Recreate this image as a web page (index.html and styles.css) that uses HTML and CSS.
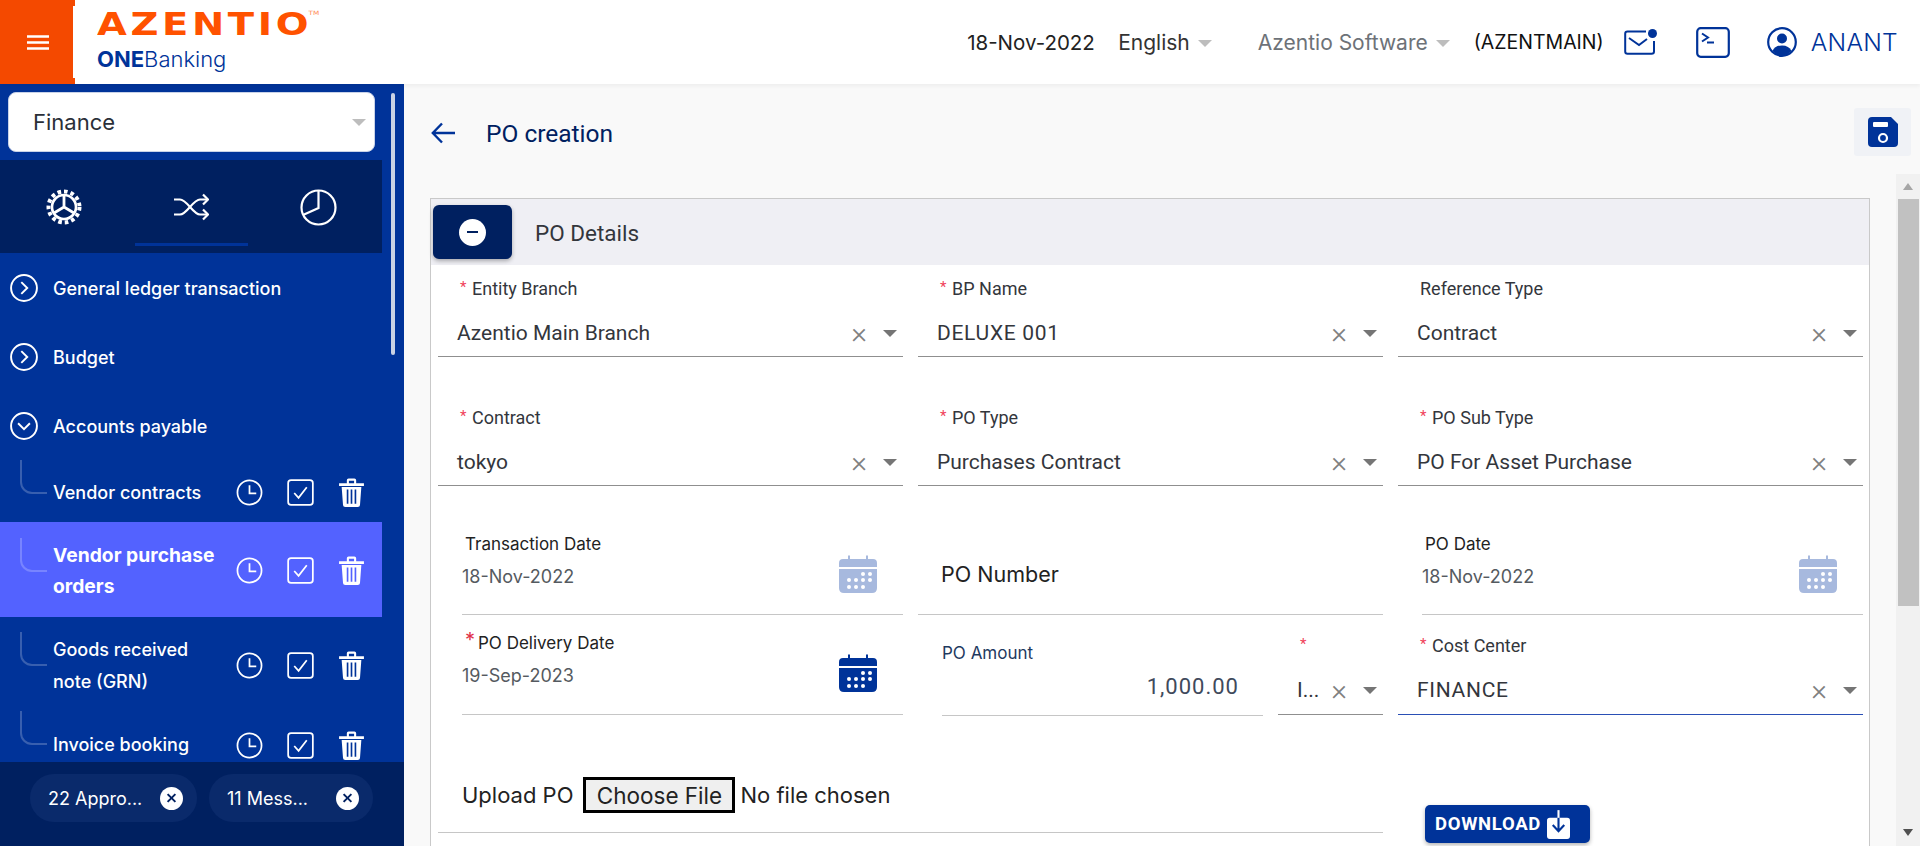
FILE: index.html
```html
<!DOCTYPE html>
<html lang="en">
<head>
    <meta charset="UTF-8">
    <title>PO creation</title>
    <link rel="stylesheet" href="styles.css">
</head>
<body>

    <svg class="sprite" xmlns="http://www.w3.org/2000/svg">
        <symbol id="i-clock" viewBox="0 0 28 28">
            <circle cx="14" cy="14" r="12.5" fill="none" stroke="currentColor" stroke-width="1.8"/>
            <path d="M14 6.5V15H21" fill="none" stroke="currentColor" stroke-width="1.8"/>
        </symbol>
        <symbol id="i-check" viewBox="0 0 28 28">
            <rect x="1.2" y="1.2" width="25.6" height="25.6" rx="3" fill="none" stroke="currentColor" stroke-width="1.8"/>
            <path d="M7.5 14.5L12 19.5L20.5 8.5" fill="none" stroke="currentColor" stroke-width="1.8"/>
        </symbol>
        <symbol id="i-trash" viewBox="0 0 24 28">
            <path d="M0 5H24V7.8H0ZM7.5 5V2.2Q7.5 0.5 9.2 0.5H14.8Q16.5 0.5 16.5 2.2V5H14.5V2.6H9.5V5Z" fill="currentColor"/>
            <path d="M2.5 8.8H21.5L20.2 26Q20.1 28 18 28H6Q3.9 28 3.8 26ZM7.4 11V24.8H9V11ZM11.2 11V24.8H12.8V11ZM15 11V24.8H16.6V11Z" fill="currentColor" fill-rule="evenodd"/>
        </symbol>
        <symbol id="i-calendar" viewBox="0 0 38 38">
            <path d="M9 0.5H11V4H27V0.5H29V4H34Q38 4 38 8V12H0V8Q0 4 4 4H9Z" fill="currentColor"/>
            <path d="M0 14H38V33Q38 38 33 38H5Q0 38 0 33Z" fill="currentColor"/>
            <g fill="#fff">
                <circle cx="24" cy="19" r="2"/><circle cx="31" cy="19" r="2"/>
                <circle cx="10" cy="25" r="2"/><circle cx="17" cy="25" r="2"/><circle cx="24" cy="25" r="2"/><circle cx="31" cy="25" r="2"/>
                <circle cx="10" cy="32" r="2"/><circle cx="17" cy="32" r="2"/><circle cx="24" cy="32" r="2"/>
            </g>
        </symbol>
    </svg>

    <header class="topbar">
        <div class="brand-menu">
            <svg class="burger" width="22" height="15" viewBox="0 0 22 15"><path d="M0 1.5H22M0 7.5H22M0 13.5H22" stroke="#fff" stroke-width="2.4"/></svg>
        </div>
        <div class="logo">
            <div class="logo-main">AZENTIO<sup>TM</sup></div>
            <div class="logo-sub"><b>ONE</b>Banking</div>
        </div>
        <div class="top-right">
            <span class="top-date">18-Nov-2022</span>
            <span class="top-lang">English<i class="caret caret-light"></i></span>
            <span class="top-company">Azentio Software<i class="caret caret-light"></i></span>
            <span class="top-branch">(AZENTMAIN)</span>
            <svg class="top-mail" width="33" height="26" viewBox="0 0 33 26">
                <path d="M22 2.5H3.5Q1.2 2.5 1.2 4.8V22.5Q1.2 24.8 3.5 24.8H27.5Q30 24.8 30 22.5V12" fill="none" stroke="#003399" stroke-width="2"/>
                <path d="M5 9L15 16L23 10" fill="none" stroke="#003399" stroke-width="2"/>
                <circle cx="28.5" cy="4.5" r="4.5" fill="#003399"/>
            </svg>
            <svg class="top-console" width="34" height="31" viewBox="0 0 34 31">
                <rect x="1.2" y="1.2" width="31.6" height="28.6" rx="3.5" fill="none" stroke="#003399" stroke-width="2.2"/>
                <path d="M6 6.5L12 10.5L6 14.5M11 15.5H18" fill="none" stroke="#003399" stroke-width="2"/>
            </svg>
            <svg class="top-user" width="30" height="30" viewBox="0 0 30 30">
                <circle cx="15" cy="15" r="13.8" fill="none" stroke="#003399" stroke-width="2.2"/>
                <circle cx="15" cy="11.5" r="5" fill="#003399"/>
                <path d="M5.5 24Q8 18.5 15 18.5Q22 18.5 24.5 24Q20 28.5 15 28.5Q10 28.5 5.5 24Z" fill="#003399"/>
            </svg>
            <span class="top-user-name">ANANT</span>
        </div>
    </header>

    <div class="layout">
        <!-- Sidebar -->
        <aside class="sidebar">
            <div class="side-scroll"></div>
            <div class="module-select">
                <span>Finance</span>
                <i class="caret caret-light"></i>
            </div>
            <div class="side-tabs">
                <div class="side-tab">
                    <svg width="36" height="36" viewBox="0 0 36 36">
                        <circle cx="18" cy="18" r="15.5" fill="none" stroke="#fff" stroke-width="4" stroke-dasharray="3.6 3"/>
                        <circle cx="18" cy="18" r="12" fill="none" stroke="#fff" stroke-width="2.6"/>
                        <path d="M18 18V6.5M18 18L8 24M18 18L28 24" stroke="#fff" stroke-width="2.8"/>
                    </svg>
                </div>
                <div class="side-tab active">
                    <svg width="36" height="32" viewBox="0 0 36 32">
                        <path d="M1 8.5H7C14 8.5 20 23.5 27 23.5H34M1 23.5H7C14 23.5 20 8.5 27 8.5H34" fill="none" stroke="#fff" stroke-width="2.2"/>
                        <path d="M30 3.5L35 8.5L30 13.5M30 18.5L35 23.5L30 28.5" fill="none" stroke="#fff" stroke-width="2.2"/>
                    </svg>
                </div>
                <div class="side-tab">
                    <svg width="38" height="38" viewBox="0 0 38 38">
                        <circle cx="19.5" cy="19.5" r="17" fill="none" stroke="#fff" stroke-width="2.2"/>
                        <path d="M19.5 2V20L4 27" fill="none" stroke="#fff" stroke-width="2.2"/>
                    </svg>
                </div>
            </div>

            <nav class="side-menu">
                <div class="menu-group">
                    <svg class="menu-toggle" width="28" height="28" viewBox="0 0 26 26"><circle cx="13" cy="13" r="12" fill="none" stroke="#fff" stroke-width="1.8"/><path d="M10.5 7.5L16 13L10.5 18.5" fill="none" stroke="#fff" stroke-width="1.8"/></svg>
                    General ledger transaction
                </div>
                <div class="menu-group">
                    <svg class="menu-toggle" width="28" height="28" viewBox="0 0 26 26"><circle cx="13" cy="13" r="12" fill="none" stroke="#fff" stroke-width="1.8"/><path d="M10.5 7.5L16 13L10.5 18.5" fill="none" stroke="#fff" stroke-width="1.8"/></svg>
                    Budget
                </div>
                <div class="menu-group">
                    <svg class="menu-toggle" width="28" height="28" viewBox="0 0 26 26"><circle cx="13" cy="13" r="12" fill="none" stroke="#fff" stroke-width="1.8"/><path d="M7.5 10.5L13 16L18.5 10.5" fill="none" stroke="#fff" stroke-width="1.8"/></svg>
                    Accounts payable
                </div>

                <div class="menu-item item-vendor">
                    <span class="item-name">Vendor contracts</span>
                    <span class="item-icons">
                        <svg class="ic-clock"><use href="#i-clock"/></svg>
                        <svg class="ic-check"><use href="#i-check"/></svg>
                        <svg class="ic-trash"><use href="#i-trash"/></svg>
                    </span>
                </div>
                <div class="menu-item item-active">
                    <span class="item-name">Vendor purchase orders</span>
                    <span class="item-icons">
                        <svg class="ic-clock"><use href="#i-clock"/></svg>
                        <svg class="ic-check"><use href="#i-check"/></svg>
                        <svg class="ic-trash"><use href="#i-trash"/></svg>
                    </span>
                </div>
                <div class="menu-item item-goods">
                    <span class="item-name">Goods received note (GRN)</span>
                    <span class="item-icons">
                        <svg class="ic-clock"><use href="#i-clock"/></svg>
                        <svg class="ic-check"><use href="#i-check"/></svg>
                        <svg class="ic-trash"><use href="#i-trash"/></svg>
                    </span>
                </div>
                <div class="menu-item item-invoice">
                    <span class="item-name">Invoice booking</span>
                    <span class="item-icons">
                        <svg class="ic-clock"><use href="#i-clock"/></svg>
                        <svg class="ic-check"><use href="#i-check"/></svg>
                        <svg class="ic-trash"><use href="#i-trash"/></svg>
                    </span>
                </div>
            </nav>

            <div class="side-footer">
                <div class="chip chip-first">
                    <span>22 Appro...</span>
                    <i class="chip-close"></i>
                </div>
                <div class="chip chip-second">
                    <span>11 Mess...</span>
                    <i class="chip-close"></i>
                </div>
            </div>
        </aside>

        <!-- Main content -->
        <main class="content">
            <div class="page-head">
                <div class="page-title">
                    <svg width="25" height="22" viewBox="0 0 25 22"><path d="M24 11H2M11 1.5L1.8 11L11 20.5" fill="none" stroke="#003399" stroke-width="2.4"/></svg>
                    <span>PO creation</span>
                </div>
                <div class="save-btn">
                    <svg width="30" height="30" viewBox="0 0 30 30">
                        <path d="M4 0H23L30 7V26Q30 30 26 30H4Q0 30 0 26V4Q0 0 4 0Z" fill="#003399"/>
                        <rect x="5" y="5" width="15" height="5" rx="1" fill="#fff"/>
                        <circle cx="15" cy="21" r="4" fill="none" stroke="#fff" stroke-width="2.2"/>
                    </svg>
                </div>
            </div>

            <div class="scroll-area">
                <div class="scroll-inner">
                    <section class="card">
                        <div class="card-head">
                            <div class="collapse-btn"><i class="minus-icon"></i></div>
                            <h3>PO Details</h3>
                        </div>

                        <div class="form-grid">
                            <div class="field">
                                <label class="req">Entity Branch</label>
                                <div class="select-row">
                                    <span class="select-value">Azentio Main Branch</span>
                                    <span class="clear">&times;</span><i class="caret"></i>
                                </div>
                            </div>
                            <div class="field">
                                <label class="req">BP Name</label>
                                <div class="select-row">
                                    <span class="select-value caps">DELUXE 001</span>
                                    <span class="clear">&times;</span><i class="caret"></i>
                                </div>
                            </div>
                            <div class="field">
                                <label>Reference Type</label>
                                <div class="select-row">
                                    <span class="select-value">Contract</span>
                                    <span class="clear">&times;</span><i class="caret"></i>
                                </div>
                            </div>

                            <div class="field">
                                <label class="req">Contract</label>
                                <div class="select-row">
                                    <span class="select-value">tokyo</span>
                                    <span class="clear">&times;</span><i class="caret"></i>
                                </div>
                            </div>
                            <div class="field">
                                <label class="req">PO Type</label>
                                <div class="select-row">
                                    <span class="select-value">Purchases Contract</span>
                                    <span class="clear">&times;</span><i class="caret"></i>
                                </div>
                            </div>
                            <div class="field">
                                <label class="req">PO Sub Type</label>
                                <div class="select-row">
                                    <span class="select-value">PO For Asset Purchase</span>
                                    <span class="clear">&times;</span><i class="caret"></i>
                                </div>
                            </div>

                            <div class="date-field">
                                <div>
                                    <label>Transaction Date</label>
                                    <div class="date-value">18-Nov-2022</div>
                                </div>
                                <svg class="cal cal-off"><use href="#i-calendar"/></svg>
                            </div>
                            <div class="number-field">PO Number</div>
                            <div class="date-field date-third">
                                <div>
                                    <label>PO Date</label>
                                    <div class="date-value">18-Nov-2022</div>
                                </div>
                                <svg class="cal cal-off"><use href="#i-calendar"/></svg>
                            </div>

                            <div class="date-field date-tall">
                                <div>
                                    <label class="req">PO Delivery Date</label>
                                    <div class="date-value">19-Sep-2023</div>
                                </div>
                                <svg class="cal"><use href="#i-calendar"/></svg>
                            </div>
                            <div class="amount-group">
                                <div class="amount-field">
                                    <label>PO Amount</label>
                                    <div class="amount-value">1,000.00</div>
                                </div>
                                <div class="field field-tall field-currency">
                                    <label class="req"></label>
                                    <div class="select-row">
                                        <span class="select-value">I...</span>
                                        <span class="clear">&times;</span><i class="caret"></i>
                                    </div>
                                </div>
                            </div>
                            <div class="field field-tall">
                                <label class="req">Cost Center</label>
                                <div class="select-row focused">
                                    <span class="select-value caps">FINANCE</span>
                                    <span class="clear">&times;</span><i class="caret"></i>
                                </div>
                            </div>

                            <div class="upload-field">
                                <span class="upload-label">Upload PO</span>
                                <button type="button" class="file-btn">Choose File</button>
                                <span class="file-name">No file chosen</span>
                            </div>
                            <div class="download-cell">
                                <button type="button" class="download-btn">
                                    DOWNLOAD
                                    <svg width="23" height="29" viewBox="0 0 24 30">
                                        <path d="M3 8H21Q24 8 24 11V27Q24 30 21 30H3Q0 30 0 27V11Q0 8 3 8Z" fill="#fff"/>
                                        <path d="M12 8V21M6 15.5L12 22L18 15.5" fill="none" stroke="#003399" stroke-width="2.2"/>
                                        <path d="M12 0V8" stroke="#fff" stroke-width="2.2"/>
                                    </svg>
                                </button>
                            </div>
                        </div>
                    </section>
                </div>

                <div class="scroll-track">
                    <i class="arrow-up"></i>
                    <div class="scroll-thumb"></div>
                    <i class="arrow-down"></i>
                </div>
            </div>
        </main>
    </div>

</body>
</html>
```

FILE: styles.css
```css
* {
    box-sizing: border-box;
}

html, body {
    height: 100%;
}

body {
    margin: 0;
    height: 846px;
    overflow: hidden;
    background: #f9f9f9;
    font-family: Roboto, Arial, sans-serif;
    color: #222;
    display: flex;
    flex-direction: column;
}

.sprite {
    display: none;
}

.caret {
    display: inline-block;
    width: 0;
    height: 0;
    border-left: 7px solid transparent;
    border-right: 7px solid transparent;
    border-top: 7px solid #757575;
}

.caret-light {
    border-top-color: #bdbdbd;
}

/* Top bar */
.topbar {
    flex: 0 0 84px;
    display: flex;
    align-items: center;
    background: #fff;
    box-shadow: 0 2px 4px rgba(0, 0, 0, 0.05);
    position: relative;
    z-index: 2;
}

.brand-menu {
    width: 75px;
    height: 84px;
    background: #f44900;
    display: flex;
    align-items: center;
    justify-content: center;
    position: relative;
}

/* white notch on the orange block */
.brand-menu::after {
    content: "";
    position: absolute;
    right: 0;
    top: 6px;
    bottom: 6px;
    width: 2px;
    background: #fff;
}

.logo {
    margin-left: 22px;
    height: 84px;
    padding-top: 7px;
}

.logo-main {
    font-family: "DejaVu Sans", sans-serif;
    font-weight: 700;
    font-size: 32px;
    line-height: 34px;
    color: #ff5200;
    letter-spacing: 3px;
    width: 172px;
    white-space: nowrap;
    transform: scaleX(1.205);
    transform-origin: left;
}

.logo-main sup {
    font-size: 6px;
    font-weight: 400;
    color: #ff8c5a;
    letter-spacing: 0;
    vertical-align: 20px;
    line-height: 0;
    margin-left: -3px;
}

.logo-sub {
    font-family: Inter, sans-serif;
    font-size: 22px;
    line-height: 26px;
    margin-top: 5px;
    font-weight: 300;
    color: #003399;
}

.logo-sub b {
    font-weight: 700;
}

.top-right {
    margin-left: auto;
    display: flex;
    align-items: center;
    font-family: Inter, sans-serif;
    height: 84px;
    padding-right: 22px;
}

.top-date {
    width: 127px;
    white-space: nowrap;
    font-size: 20.5px;
    color: #222;
    margin-right: 24px;
}

.top-lang {
    font-size: 21px;
    color: #333;
    margin-right: 46px;
}

.top-company {
    font-size: 21px;
    color: #6d7278;
    margin-right: 24px;
}

.top-lang .caret,
.top-company .caret {
    margin-left: 8px;
    vertical-align: 3px;
}

.top-branch {
    font-size: 19.5px;
    width: 129px;
    white-space: nowrap;
    color: #111;
    margin-right: 21px;
}

.top-console {
    margin-left: 39px;
}

.top-user {
    margin-left: 37px;
}

.top-user-name {
    font-size: 24.5px;
    font-weight: 300;
    letter-spacing: 0.3px;
    color: #003399;
    margin-left: 14px;
}

/* Layout */
.layout {
    flex: 1;
    display: flex;
    min-height: 0;
}

/* Sidebar */
.sidebar {
    width: 404px;
    background: #003399;
    display: flex;
    flex-direction: column;
    position: relative;
    font-family: Inter, sans-serif;
    color: #fff;
}

.side-scroll {
    position: absolute;
    left: 391px;
    top: 9px;
    width: 4px;
    height: 262px;
    background: #c9d2e4;
    border-radius: 2px;
}

.module-select {
    margin: 8px 29px 8px 8px;
    height: 60px;
    background: #fff;
    border-radius: 8px;
    border: 1px solid #c8d2e8;
    display: flex;
    align-items: center;
    justify-content: space-between;
    padding: 0 8px 0 24px;
    font-size: 22px;
    color: #2a2f38;
}

.side-tabs {
    width: 382px;
    height: 93px;
    background: #002060;
    display: flex;
}

.side-tab {
    flex: 1;
    display: flex;
    align-items: center;
    justify-content: center;
    position: relative;
}

.side-tab.active::after {
    content: "";
    position: absolute;
    left: 8px;
    right: 7px;
    bottom: 7px;
    height: 3px;
    background: #003399;
}

.side-menu {
    flex: 1;
    min-height: 0;
    overflow: hidden;
    width: 382px;
}

.menu-group {
    height: 70px;
    display: flex;
    align-items: center;
    gap: 15px;
    padding-left: 10px;
    font-size: 18px;
    font-weight: 500;
}

.menu-group:nth-child(2) {
    height: 68px;
}

.menu-item {
    display: flex;
    align-items: center;
    position: relative;
    padding-left: 53px;
    font-size: 18px;
    font-weight: 500;
    line-height: 32px;
}

/* tree connector */
.menu-item::before {
    content: "";
    position: absolute;
    left: 20px;
    width: 25px;
    height: 32px;
    border-left: 2px solid rgba(255, 255, 255, 0.22);
    border-bottom: 2px solid rgba(255, 255, 255, 0.22);
    border-bottom-left-radius: 12px;
}

.item-vendor {
    height: 61px;
    padding-top: 2px;
}

.item-vendor::before {
    top: -1px;
}

.item-active {
    height: 95px;
    padding-top: 2px;
    background: #5362ff;
    font-size: 19.3px;
    font-weight: 700;
    line-height: 31px;
}

.item-active::before {
    top: 16px;
}

.item-goods {
    height: 94px;
    padding-top: 3px;
}

.item-goods::before {
    top: 15px;
}

.item-invoice {
    height: 68px;
}

.item-invoice::before {
    top: 0;
}

.item-name {
    width: 170px;
}

.item-icons {
    margin-left: auto;
    width: 150px;
    display: flex;
    align-items: center;
    padding-left: 3.5px;
}

.ic-clock {
    width: 27px;
    height: 27px;
}

.ic-check {
    width: 27px;
    height: 27px;
    margin-left: 24px;
}

.ic-trash {
    width: 25px;
    height: 29px;
    margin-left: 25px;
}

.side-footer {
    flex: 0 0 84px;
    background: #002060;
    padding: 12px 31px 0 30px;
    display: flex;
    gap: 12px;
}

.chip {
    height: 48px;
    border-radius: 24px;
    background: #0a2a6b;
    display: flex;
    align-items: center;
    justify-content: space-between;
    font-size: 18px;
    padding: 0 14px 0 18px;
}

.chip-first {
    width: 167px;
}

.chip-second {
    width: 164px;
}

.chip-close {
    width: 23px;
    height: 23px;
    border-radius: 50%;
    background: #fff;
    position: relative;
}

.chip-close::before,
.chip-close::after {
    content: "";
    position: absolute;
    left: 6px;
    top: 10.5px;
    width: 11px;
    height: 2px;
    background: #002060;
    transform: rotate(45deg);
}

.chip-close::after {
    transform: rotate(-45deg);
}

/* Main content */
.content {
    flex: 1;
    min-width: 0;
    display: flex;
    flex-direction: column;
}

.page-head {
    flex: 0 0 90px;
    display: flex;
    align-items: flex-start;
    justify-content: space-between;
    padding: 24px 9px 0 27px;
}

.page-title {
    display: flex;
    align-items: center;
    gap: 30px;
    font-size: 24.5px;
    color: #002060;
    height: 50px;
}

.save-btn {
    width: 57px;
    height: 48px;
    background: #f0f2f6;
    border-radius: 3px;
    display: flex;
    align-items: center;
    justify-content: center;
}

.scroll-area {
    flex: 1;
    min-height: 0;
    display: flex;
}

.scroll-inner {
    flex: 1;
    min-width: 0;
    padding: 24px 26px 0 26px;
    overflow: hidden;
}

.scroll-track {
    width: 24px;
    background: #f1f1f1;
    display: flex;
    flex-direction: column;
    align-items: center;
    padding-top: 9px;
}

.arrow-up,
.arrow-down {
    width: 0;
    height: 0;
    border-left: 5px solid transparent;
    border-right: 5px solid transparent;
}

.arrow-up {
    border-bottom: 7px solid #a6a6a6;
}

.arrow-down {
    border-top: 7px solid #505050;
    margin-top: auto;
    margin-bottom: 10px;
}

.scroll-thumb {
    width: 21px;
    height: 407px;
    margin-top: 9px;
    background: #c1c1c1;
}

.card {
    border: 1px solid #c9c9c9;
    background: #fff;
    height: 800px;
}

.card-head {
    height: 66px;
    background: #efeff4;
    display: flex;
    align-items: center;
    padding: 0 0 0 2px;
}

.card-head h3 {
    margin: 2px 0 0 23px;
    font-weight: 400;
    font-size: 22.5px;
    color: #33363c;
}

.collapse-btn {
    width: 79px;
    height: 54px;
    background: #002060;
    border-radius: 6px;
    box-shadow: 0 2px 4px rgba(0, 0, 0, 0.3);
    display: flex;
    align-items: center;
    justify-content: center;
}

.minus-icon {
    width: 27px;
    height: 27px;
    border-radius: 50%;
    background: #fff;
    position: relative;
}

.minus-icon::after {
    content: "";
    position: absolute;
    left: 8px;
    top: 12.5px;
    width: 11px;
    height: 2px;
    background: #002060;
}

/* Form */
.form-grid {
    display: grid;
    grid-template-columns: 465px 465px 465px;
    grid-template-rows: 129px 129px 92px 100px auto;
    column-gap: 15px;
    padding: 0 6px 0 7px;
}

.field {
    height: 92px;
    display: flex;
    flex-direction: column;
}

.field label {
    font-size: 18px;
    line-height: 24px;
    min-height: 24px;
    margin-top: 12px;
    padding-left: 22px;
    color: #33363c;
    position: relative;
}

.field label.req {
    padding-left: 34px;
}

label.req::before {
    content: "*";
    color: #f0405a;
    font-size: 15px;
    position: absolute;
    margin-left: -12px;
    top: -2px;
}

.select-row {
    margin-top: auto;
    height: 47px;
    display: flex;
    align-items: center;
    border-bottom: 1.5px solid #8f8f8f;
    padding: 0 6px 0 19px;
}

.select-row.focused {
    border-bottom-color: #2a4fb5;
}

.select-value {
    flex: 1;
    min-width: 0;
    white-space: nowrap;
    font-size: 21px;
    color: #33363c;
}

.select-value.caps {
    letter-spacing: 0.7px;
}

.clear {
    font-size: 30px;
    line-height: 20px;
    color: #808080;
    margin-right: 16px;
    font-weight: 300;
}

.date-field {
    height: 92px;
    border-bottom: 1.5px solid #c6c6c6;
    margin-left: 24px;
    display: flex;
    justify-content: space-between;
    align-items: flex-start;
    padding: 9px 26px 0 0;
}

.date-field label {
    display: block;
    font-family: Inter, sans-serif;
    font-size: 17px;
    line-height: 24px;
    color: #222;
    margin-left: 3px;
}

.date-value {
    font-family: Inter, sans-serif;
    font-size: 18px;
    line-height: 24px;
    margin-top: 9px;
    color: #555a60;
}

.cal {
    width: 38px;
    height: 38px;
    color: #003399;
    margin-top: 23px;
}

.cal-off {
    color: #a7b9de;
}

.date-tall {
    height: 100px;
    padding-top: 16px;
}

.date-tall label.req {
    position: relative;
    padding-left: 13px;
}

.date-tall label.req::before {
    margin-left: -13px;
    top: -3px;
    color: #e0304a;
    font-size: 20px;
}

.number-field {
    height: 92px;
    border-bottom: 1.5px solid #c6c6c6;
    font-family: Inter, sans-serif;
    font-size: 21.5px;
    padding: 38px 0 0 23px;
    color: #222;
}

.amount-group {
    display: flex;
    gap: 15px;
    padding-left: 24px;
}

.amount-field {
    width: 321px;
    height: 101px;
    border-bottom: 1.5px solid #c6c6c6;
    padding-top: 26px;
    flex: none;
}

.amount-field label {
    display: block;
    font-family: Inter, sans-serif;
    font-size: 17px;
    line-height: 24px;
    color: #1f3a5f;
}

.amount-value {
    text-align: right;
    font-size: 22px;
    color: #3f4a5c;
    margin-top: 9px;
    padding-right: 24px;
    letter-spacing: 1px;
}

.field-tall {
    height: 100px;
}

.field-tall label {
    margin-top: 19px;
}

.field-tall .select-row {
    height: 49px;
}

.field-currency {
    flex: 1;
    min-width: 0;
}

.field-currency label {
    margin-top: 24px;
    min-height: 0;
    height: 14px;
    line-height: 14px;
}

.field-currency label.req {
    padding-left: 34px;
}

.upload-field {
    grid-column: 1 / span 2;
    height: 118px;
    border-bottom: 1.5px solid #c6c6c6;
    display: flex;
    align-items: flex-start;
    padding: 62px 0 0 24px;
    font-family: Inter, sans-serif;
    font-size: 22px;
    color: #222;
}

.upload-label {
    margin-top: 5px;
}

.file-btn {
    margin-left: 10px;
    height: 36px;
    width: 152px;
    background: #efefef;
    border: 3px solid #000;
    font-family: Inter, sans-serif;
    font-size: 22.5px;
    color: #222;
    padding: 0;
}

.file-name {
    margin-left: 5px;
    margin-top: 5px;
}

.download-cell {
    padding: 90px 0 0 27px;
}

.download-btn {
    width: 165px;
    height: 38px;
    background: #003399;
    border: none;
    border-radius: 5px;
    box-shadow: 0 2px 4px rgba(0, 0, 0, 0.3);
    color: #fff;
    font-family: Roboto, Arial, sans-serif;
    font-weight: 700;
    font-size: 18.5px;
    letter-spacing: 0.7px;
    display: flex;
    align-items: center;
    gap: 6px;
    padding: 0 0 0 10px;
}
```
